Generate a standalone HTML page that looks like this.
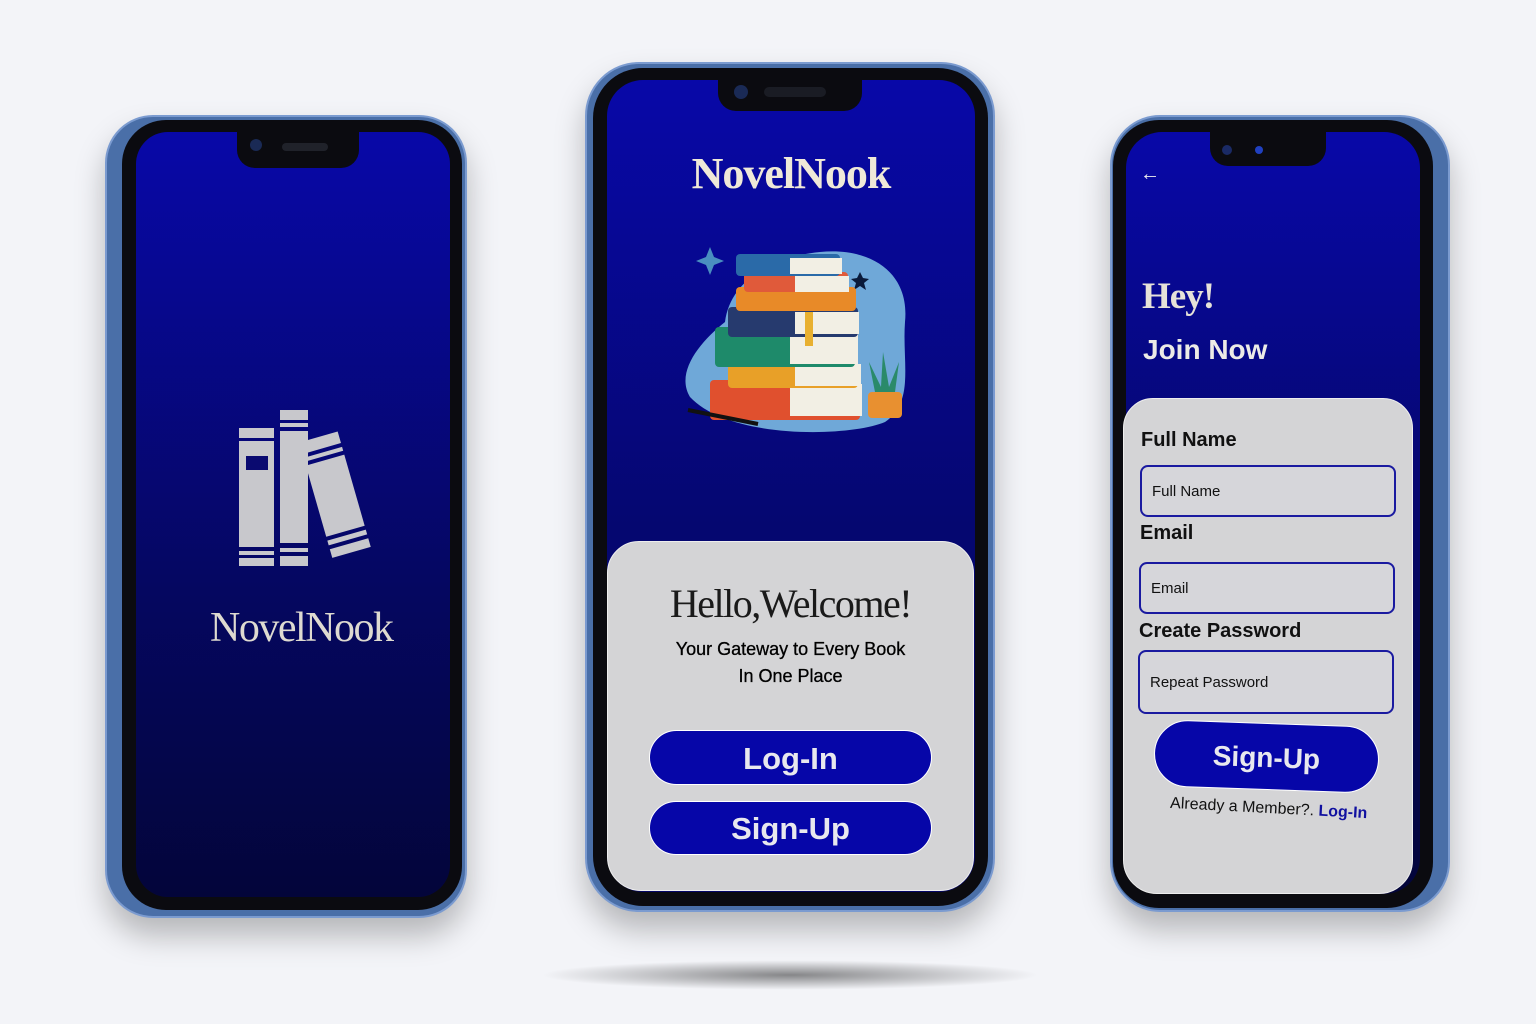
<!DOCTYPE html>
<html><head><meta charset="utf-8"><style>
*{margin:0;padding:0;box-sizing:border-box}
body{width:1536px;height:1024px;background:#f3f4f8;position:relative;overflow:hidden;font-family:"Liberation Sans",sans-serif}
.abs{position:absolute}
.frame{position:absolute;background:#4a6fa8;border:2px solid #7b9bd0;box-shadow:0 18px 30px rgba(0,0,0,.25)}
.bezel{position:absolute;background:#0b0b10}
.screen{position:absolute;overflow:hidden;background:linear-gradient(#0808a8,#050760 60%,#03053a)}
.notch{position:absolute;background:#0b0b10;border-radius:0 0 18px 18px}
.serif{font-family:"Liberation Serif",serif}
.t{position:absolute;white-space:nowrap}
.btn{position:absolute;background:#0606a8;border-radius:30px;color:#e8e8ee;font-weight:bold;text-align:center;border:1px solid #fff}
.inp{position:absolute;border:2px solid #1a1aa0;border-radius:8px;background:#d6d6da;font-size:15px;color:#111;padding-left:10px;display:flex;align-items:center}
.lab{position:absolute;font-size:20px;font-weight:bold;color:#111}
</style></head><body>

<div class="abs" style="left:540px;top:960px;width:500px;height:30px;border-radius:50%;background:radial-gradient(ellipse,rgba(0,0,0,.45),rgba(0,0,0,0) 70%)"></div>

<!-- LEFT PHONE -->
<div class="frame" style="left:105px;top:115px;width:362px;height:803px;border-radius:48px"></div>
<div class="bezel" style="left:122px;top:120px;width:340px;height:790px;border-radius:44px"></div>
<div class="screen" style="left:136px;top:132px;width:314px;height:765px;border-radius:32px"></div>
<div class="notch" style="left:237px;top:130px;width:122px;height:38px"></div>
<div class="abs" style="left:250px;top:139px;width:12px;height:12px;border-radius:50%;background:#1a2a55"></div>
<div class="abs" style="left:282px;top:143px;width:46px;height:8px;border-radius:4px;background:#20222a"></div>
<svg class="abs" style="left:236px;top:408px" width="140" height="160" viewBox="0 0 140 160">
<g fill="#c8c8cc">
<rect x="3" y="20" width="35" height="10"/><rect x="3" y="33" width="35" height="106"/>
<rect x="3" y="143" width="35" height="4"/><rect x="3" y="150" width="35" height="8"/>
<rect x="44" y="2" width="28" height="10"/><rect x="44" y="15" width="28" height="4"/><rect x="44" y="23" width="28" height="112"/>
<rect x="44" y="140" width="28" height="4"/><rect x="44" y="148" width="28" height="10"/>
<g transform="rotate(-16 102 90)"><rect x="80" y="26" width="40" height="12"/><rect x="80" y="42" width="40" height="4"/><rect x="80" y="50" width="40" height="74"/><rect x="80" y="128" width="40" height="5"/><rect x="80" y="137" width="40" height="9"/></g>
</g>
<rect x="10" y="48" width="22" height="14" fill="#0a0a70"/>
</svg>
<div class="t serif" style="left:210px;top:604px;font-size:42px;color:#dedad0;letter-spacing:-1.5px">NovelNook</div>

<!-- CENTER PHONE -->
<div class="frame" style="left:585px;top:62px;width:410px;height:850px;border-radius:54px"></div>
<div class="bezel" style="left:593px;top:68px;width:395px;height:838px;border-radius:50px"></div>
<div class="screen" style="left:607px;top:80px;width:368px;height:812px;border-radius:36px;background:linear-gradient(#0808a8,#050770 55%,#050766)"></div>
<div class="notch" style="left:718px;top:78px;width:144px;height:33px"></div>
<div class="abs" style="left:734px;top:85px;width:14px;height:14px;border-radius:50%;background:#1a2a55"></div>
<div class="abs" style="left:764px;top:87px;width:62px;height:10px;border-radius:5px;background:#1a1c24"></div>
<div class="t serif" style="left:607px;width:368px;text-align:center;top:148px;font-size:44px;font-weight:bold;color:#efe9d8;letter-spacing:-1px">NovelNook</div>
<svg class="abs" style="left:670px;top:232px" width="250" height="210" viewBox="0 0 250 210">
<path d="M20 165 C5 140 30 110 55 90 C60 50 100 25 150 20 C200 15 240 40 235 90 C232 130 245 170 215 190 C180 205 60 208 20 165Z" fill="#6fa8d8"/>
<path d="M40 15 l4 10 10 4 -10 4 -4 10 -4 -10 -10 -4 10 -4z" fill="#4a8ec0"/>
<path d="M190 40 l3 6 6 1 -5 4 2 7 -6 -4 -6 4 2 -7 -5 -4 6 -1z" fill="#0a1a3a"/>
<g>
<rect x="40" y="148" width="150" height="40" rx="4" fill="#e0502e"/><rect x="120" y="152" width="72" height="32" fill="#f2efe4"/>
<rect x="58" y="128" width="130" height="28" rx="4" fill="#e8a028"/><rect x="125" y="132" width="66" height="22" fill="#f2efe4"/>
<rect x="45" y="95" width="140" height="40" rx="4" fill="#1e8a6a"/><rect x="120" y="100" width="68" height="32" fill="#f2efe4"/>
<rect x="58" y="75" width="130" height="30" rx="4" fill="#263a6e"/><rect x="125" y="80" width="64" height="22" fill="#f2efe4"/>
<rect x="135" y="80" width="8" height="34" fill="#e8b030"/>
<rect x="66" y="55" width="120" height="24" rx="4" fill="#e88a28"/>
<rect x="74" y="40" width="104" height="20" rx="4" fill="#e05a3a"/><rect x="125" y="44" width="54" height="16" fill="#f2efe4"/>
<rect x="66" y="22" width="104" height="22" rx="4" fill="#2a6aa8"/><rect x="120" y="26" width="52" height="16" fill="#f2efe4"/>
</g>
<rect x="198" y="160" width="34" height="26" rx="4" fill="#e89030"/>
<path d="M205 160 l-6 -30 12 25 2 -35 6 35 10 -25 -4 30z" fill="#2a8a6a"/>
<path d="M18 178 l70 14" stroke="#111" stroke-width="4"/>
</svg>
<div class="abs" style="left:607px;top:541px;width:367px;height:350px;background:#d4d4d6;border-radius:32px 32px 34px 34px;border:1px solid #eee"></div>
<div class="t serif" style="left:607px;width:367px;text-align:center;top:580px;font-size:40px;color:#1a1a1a;letter-spacing:-1.5px">Hello,Welcome!</div>
<div class="t" style="left:607px;width:367px;text-align:center;top:636px;font-size:18px;color:#000;line-height:27px;-webkit-text-stroke:0.3px #000">Your Gateway to Every Book<br>In One Place</div>
<div class="btn" style="left:649px;top:730px;width:283px;height:55px;font-size:31px;line-height:55px">Log-In</div>
<div class="btn" style="left:649px;top:801px;width:283px;height:54px;font-size:31px;line-height:54px">Sign-Up</div>

<!-- RIGHT PHONE -->
<div class="frame" style="left:1110px;top:115px;width:340px;height:797px;border-radius:50px"></div>
<div class="bezel" style="left:1113px;top:120px;width:320px;height:788px;border-radius:46px"></div>
<div class="screen" style="left:1126px;top:132px;width:294px;height:762px;border-radius:36px"></div>
<div class="notch" style="left:1210px;top:130px;width:116px;height:36px"></div>
<div class="abs" style="left:1222px;top:145px;width:10px;height:10px;border-radius:50%;background:#1a2a65"></div>
<div class="abs" style="left:1255px;top:146px;width:8px;height:8px;border-radius:50%;background:#2040c0"></div>
<div class="t" style="left:1140px;top:163px;font-size:20px;color:#eee">←</div>
<div class="t serif" style="left:1142px;top:275px;font-size:37px;font-weight:bold;color:#e6e2d8;letter-spacing:-1px">Hey!</div>
<div class="t" style="left:1143px;top:334px;font-size:28px;color:#ecebe6;font-weight:bold">Join Now</div>
<div class="abs" style="left:1123px;top:398px;width:290px;height:496px;background:#d4d4d6;border-radius:30px 30px 34px 34px;border:1px solid #eee"></div>
<div class="lab" style="left:1141px;top:429px">Full Name</div>
<div class="inp" style="left:1140px;top:465px;width:256px;height:52px">Full Name</div>
<div class="lab" style="left:1140px;top:522px">Email</div>
<div class="inp" style="left:1139px;top:562px;width:256px;height:52px">Email</div>
<div class="lab" style="left:1139px;top:620px">Create Password</div>
<div class="inp" style="left:1138px;top:650px;width:256px;height:64px">Repeat Password</div>
<div class="btn" style="left:1154px;top:723px;width:225px;height:67px;font-size:28px;line-height:67px;border-radius:34px;transform:rotate(2deg)">Sign-Up</div>
<div class="t" style="left:1170px;top:800px;font-size:16px;color:#111;transform:rotate(3deg)">Already a Member?. <span style="color:#1010a0;font-weight:bold">Log-In</span></div>

</body></html>
